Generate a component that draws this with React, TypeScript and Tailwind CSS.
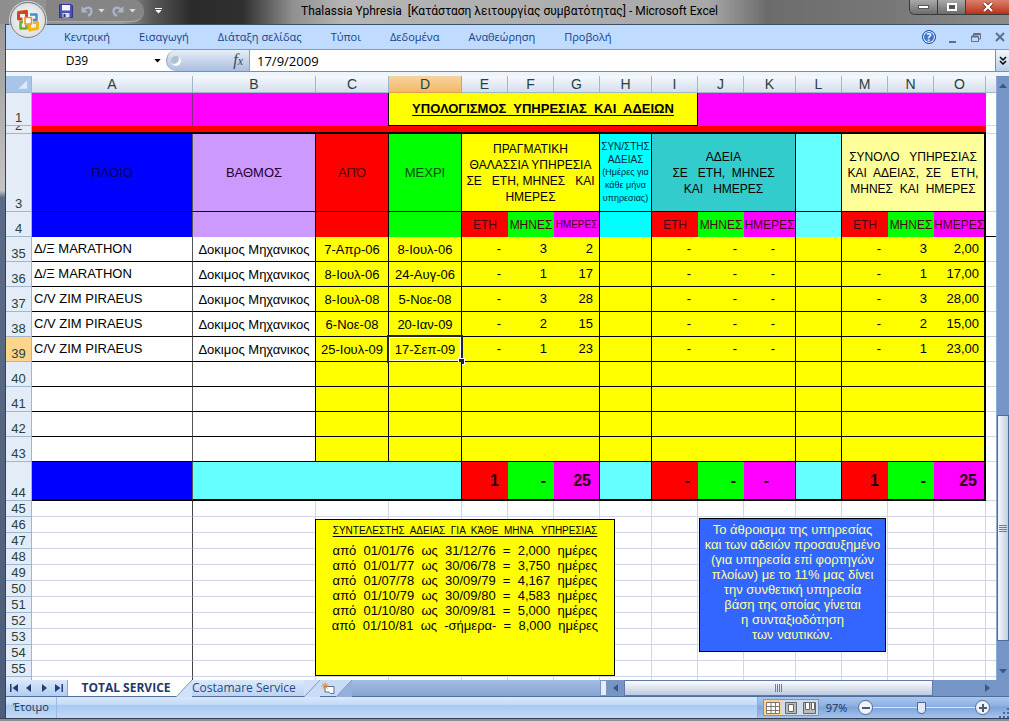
import type { ReactNode } from 'react';

const COLUMNS = [
  { letter: 'A', width: 'w-[161px]' },
  { letter: 'B', width: 'w-[123px]' },
  { letter: 'C', width: 'w-[73px]' },
  { letter: 'D', width: 'w-[73px]' },
  { letter: 'E', width: 'w-[46px]' },
  { letter: 'F', width: 'w-[46px]' },
  { letter: 'G', width: 'w-[46px]' },
  { letter: 'H', width: 'w-[52px]' },
  { letter: 'I', width: 'w-[46px]' },
  { letter: 'J', width: 'w-[46px]' },
  { letter: 'K', width: 'w-[52px]' },
  { letter: 'L', width: 'w-[46px]' },
  { letter: 'M', width: 'w-[46px]' },
  { letter: 'N', width: 'w-[46px]' },
  { letter: 'O', width: 'w-[52px]' },
];

const RIBBON_TABS = [
  'Κεντρική',
  'Εισαγωγή',
  'Διάταξη σελίδας',
  'Τύποι',
  'Δεδομένα',
  'Αναθεώρηση',
  'Προβολή',
];

interface Service {
  row: number;
  ship?: string;
  rank?: string;
  from?: string;
  to?: string;
  months?: string;
  days?: string;
}

const SERVICES: Service[] = [
  { row: 35, ship: 'Δ/Ξ MARATHON', rank: 'Δοκιμος Μηχανικος', from: '7-Απρ-06', to: '8-Ιουλ-06', months: '3', days: '2' },
  { row: 36, ship: 'Δ/Ξ MARATHON', rank: 'Δοκιμος Μηχανικος', from: '8-Ιουλ-06', to: '24-Αυγ-06', months: '1', days: '17' },
  { row: 37, ship: 'C/V ZIM PIRAEUS', rank: 'Δοκιμος Μηχανικος', from: '8-Ιουλ-08', to: '5-Νοε-08', months: '3', days: '28' },
  { row: 38, ship: 'C/V ZIM PIRAEUS', rank: 'Δοκιμος Μηχανικος', from: '6-Νοε-08', to: '20-Ιαν-09', months: '2', days: '15' },
  { row: 39, ship: 'C/V ZIM PIRAEUS', rank: 'Δοκιμος Μηχανικος', from: '25-Ιουλ-09', to: '17-Σεπ-09', months: '1', days: '23' },
  { row: 40 },
  { row: 41 },
  { row: 42 },
  { row: 43 },
];

const EMPTY_ROWS = [45, 46, 47, 48, 49, 50, 51, 52, 53, 54, 55, 56];

const RATES = [
  'από  01/01/76  ως  31/12/76  =  2,000  ημέρες',
  'από  01/01/77  ως  30/06/78  =  3,750  ημέρες',
  'από  01/07/78  ως  30/09/79  =  4,167  ημέρες',
  'από  01/10/79  ως  30/09/80  =  4,583  ημέρες',
  'από  01/10/80  ως  30/09/81  =  5,000  ημέρες',
  'από  01/10/81  ως  -σήμερα-  =  8,000  ημέρες',
];

const NOTE = [
  'Το άθροισμα της υπηρεσίας',
  'και των αδειών προσαυξημένο',
  '(για υπηρεσία επί φορτηγών',
  'πλοίων) με το 11% μας δίνει',
  'την συνθετική υπηρεσία',
  'βάση της οποίας γίνεται',
  'η συνταξιοδότηση',
  'των ναυτικών.',
];

function OfficeLogo() {
  return (
    <svg viewBox="0 0 24 24" className="size-6" fill="none" strokeLinejoin="round">
      <path d="M10.500 9.500V3.200L2.500 4.500v6.500h4" stroke="#d0481a" strokeWidth="3" />
      <path d="M14 6.500h6.500v5.500H17" stroke="#3f8fd0" strokeWidth="2.400" />
      <path d="M7 14H4.500v6.500h6V17" stroke="#6fae2c" strokeWidth="2.600" />
      <path d="M13.500 16v6l8-1.500v-6H17" stroke="#f2b41f" strokeWidth="3" />
      <path d="M9 9.500h6.500V16H9z" stroke="#e9922e" strokeWidth="1.600" fill="#fff" />
    </svg>
  );
}

function SaveIcon() {
  return (
    <svg viewBox="0 0 16 16" className="size-4">
      <path d="M1.500 1.500h11.500l1.500 1.500v11.500h-13z" fill="#4a51b5" stroke="#30358c" />
      <path d="M4 2h8v5.500H4z" fill="#f4f6ff" />
      <path d="M4.500 10h7v4.500h-7z" fill="#d9dcf0" />
      <path d="M5.500 11h2v3h-2z" fill="#2a2f7c" />
    </svg>
  );
}

function UndoIcon({ flipped = false }: { flipped?: boolean }) {
  return (
    <svg viewBox="0 0 14 14" className={flipped ? 'size-[14px] -scale-x-100' : 'size-[14px]'} fill="none">
      <path d="M4 6c2-3.500 7.500-3 7.500 1.200 0 2.300-1.500 3.800-3.500 4.600" stroke="#aab4c6" strokeWidth="2.200" />
      <path d="M1.500 2v6.500H8z" fill="#aab4c6" />
    </svg>
  );
}

function Caret({ className }: { className: string }) {
  return (
    <svg viewBox="0 0 8 5" className={className}>
      <path d="M0 0h8L4 4.500z" fill="currentColor" />
    </svg>
  );
}

function TitleBar() {
  return (
    <header className="relative flex h-[24px] shrink-0 items-start bg-[linear-gradient(90deg,#8e8e8e_0,#9a9a9a_12%,#5a5a5a_15%,#2b2b2b_19%,#2f2f2f_24%,#8f8f8f_29%,#b5b5b5_34%,#a9a9a9_70%,#6c6c6c_76%,#777_88%,#8c8c8c_100%)]">
      <div className="ml-[46px] flex h-[22px] items-center rounded-r-xl border-b border-[#a8a8a8] bg-[#858585] pr-2 pl-3">
        <button aria-label="Αποθήκευση">
          <SaveIcon />
        </button>
        <button aria-label="Αναίρεση" className="ml-[6px] flex items-center gap-1 text-[#dcdcdc]">
          <UndoIcon />
          <Caret className="h-1 w-[7px]" />
        </button>
        <button aria-label="Επανάληψη" className="ml-[6px] flex items-center gap-1 text-[#dcdcdc]">
          <UndoIcon flipped />
          <Caret className="h-1 w-[7px]" />
        </button>
      </div>
      <button aria-label="Προσαρμογή" className="mt-2 ml-[10px] flex w-2 flex-col items-center gap-px text-white">
        <span className="h-px w-[7px] bg-white" />
        <Caret className="h-1 w-[7px]" />
      </button>
      <h1 className="flex-1 pr-[52px] text-center font-['Roboto','Open_Sans',sans-serif] text-[12px] leading-[23px] whitespace-pre text-black">
        {'Thalassia Yphresia  [Κατάσταση λειτουργίας συμβατότητας] - Microsoft Excel'}
      </h1>
      <div className="flex h-[15px] overflow-hidden rounded-bl-md border-b border-l border-[#3a3a3a] text-white">
        <button
          aria-label="Ελαχιστοποίηση"
          className="flex w-7 items-center justify-center border-r border-[#3a3a3a] bg-linear-to-b from-[#a9a9a9] to-[#6d6d6d]"
        >
          <span className="h-1 w-[11px] border border-[#555] bg-white" />
        </button>
        <button
          aria-label="Επαναφορά"
          className="flex w-7 items-center justify-center border-r border-[#3a3a3a] bg-linear-to-b from-[#a9a9a9] to-[#6d6d6d]"
        >
          <span className="h-2 w-[10px] border-2 border-white bg-[#555]" />
        </button>
        <button
          aria-label="Κλείσιμο"
          className="flex w-[43px] items-center justify-center bg-linear-to-b from-[#d8806b] to-[#bd2c12]"
        >
          <svg viewBox="0 0 12 10" className="h-[10px] w-3" fill="none">
            <path d="m2 1 8 8M10 1 2 9" stroke="#5c2018" strokeWidth="3.600" />
            <path d="m2 1 8 8M10 1 2 9" stroke="#fff" strokeWidth="2.400" />
          </svg>
        </button>
      </div>
    </header>
  );
}

function Ribbon() {
  return (
    <nav className="flex h-[26px] shrink-0 items-center border-t border-b border-t-[#3f4f66] border-b-[#7d9cc6] bg-[#bfdbff] text-[#15428b]">
      <div className="flex flex-1 gap-px pl-[44px]">
        {RIBBON_TABS.map((tab) => (
          <button key={tab} className="px-[14px] text-[11px] leading-5 whitespace-nowrap">
            {tab}
          </button>
        ))}
      </div>
      <div className="flex items-center pr-1 text-[#5f6f88]">
        <button
          aria-label="Βοήθεια"
          className="mr-[13px] flex size-[14px] items-center justify-center rounded-full border border-[#1d4fa3] bg-[#3d78cf] text-[10px] leading-3 font-bold text-white ring-1 ring-white ring-inset"
        >
          ?
        </button>
        <button aria-label="Ελαχιστοποίηση παραθύρου" className="mr-[15px] flex h-3 w-[7px] items-end">
          <span className="h-[2px] w-[7px] bg-[#5f6f88]" />
        </button>
        <button aria-label="Επαναφορά παραθύρου" className="mr-[14px]">
          <svg viewBox="0 0 10 9" className="h-[9px] w-[10px]" fill="none" stroke="currentColor">
            <path d="M2.500 3V1h7v5H8" />
            <path d="M.5 3.500h7v5h-7z" />
            <path d="M.5 3.500h7M2.500 1h7" strokeWidth="2" />
          </svg>
        </button>
        <button aria-label="Κλείσιμο παραθύρου">
          <svg viewBox="0 0 10 10" className="size-[10px]" fill="none" stroke="currentColor" strokeWidth="2">
            <path d="m1 1 8 8M9 1 1 9" />
          </svg>
        </button>
      </div>
    </nav>
  );
}

function FormulaBar() {
  return (
    <div className="flex h-[26px] shrink-0 flex-col bg-[#eef4fc]">
      <div className="flex h-[22px] border-b border-[#6f93b8] bg-white">
        <input
          aria-label="Πλαίσιο ονόματος"
          defaultValue="D39"
          className="h-[21px] w-[142px] bg-white text-center text-[12px] text-black outline-none"
        />
        <button aria-label="Λίστα ονομάτων" className="flex w-[18px] items-center justify-center text-black">
          <Caret className="h-1 w-[7px]" />
        </button>
        <div className="flex w-[84px] items-center justify-between rounded-l-full border-r border-l border-[#8aa3c4] bg-linear-to-b from-[#e6eef9] to-[#a9bfde] pr-[6px] pl-1">
          <span className="size-[10px] rounded-full bg-[#b3bfd1] shadow-[inset_-2px_-2px_1px_#fff]" />
          <button aria-label="Εισαγωγή συνάρτησης" className="font-['Liberation_Serif',serif] text-[16px] leading-5 text-[#3a4658] italic">
            f<span className="text-[12px]">x</span>
          </button>
        </div>
        <input
          aria-label="Γραμμή τύπων"
          defaultValue="17/9/2009"
          className="h-[21px] min-w-0 flex-1 bg-white px-[7px] text-[13px] text-black outline-none"
        />
        <button
          aria-label="Ανάπτυξη γραμμής τύπων"
          className="flex w-[14px] items-center justify-center border-l border-[#6f93b8] bg-linear-to-b from-[#f4f8fd] to-[#b9cde8]"
        >
          <svg viewBox="0 0 8 9" className="h-[9px] w-2" fill="none" stroke="#000" strokeWidth="1.500">
            <path d="m1 1 3 3 3-3M1 5l3 3 3-3" />
          </svg>
        </button>
      </div>
    </div>
  );
}

function RowLabel({ children, active = false }: { children: ReactNode; active?: boolean }) {
  return (
    <th
      scope="row"
      className={
        active
          ? 'border-r border-b border-[#9eb6ce] bg-[#ffd58d] p-0 align-bottom text-[13px] leading-[15px] font-normal text-[#27413e]'
          : 'border-r border-b border-[#9eb6ce] bg-[#e4ecf7] p-0 align-bottom text-[13px] leading-[15px] font-normal text-[#27413e]'
      }
    >
      {children}
    </th>
  );
}

// Blank strip of column P, the last one in view
function Edge() {
  return <td className="border-b border-[#d0d7e5] bg-white p-0" />;
}

function UnitHeads({ smallDays = false, last = false }: { smallDays?: boolean; last?: boolean }) {
  return (
    <>
      <td className="bg-[#ff0000] p-0 text-center text-[12px]">ΕΤΗ</td>
      <td className="bg-[#00ff00] p-0 text-center text-[12px]">ΜΗΝΕΣ</td>
      <td
        className={`bg-[#ff00ff] p-0 text-center ${smallDays ? 'text-[10px]' : 'text-[12px]'} ${
          last ? 'border-r-2 border-black' : 'border-r border-black'
        }`}
      >
        ΗΜΕΡΕΣ
      </td>
    </>
  );
}

function ServiceRow({ row, ship, rank, from, to, months, days }: Service) {
  const plain = 'border-b border-black bg-[#ffff00] py-0 pr-[7px] pl-0 text-right';
  const closed = 'border-r border-b border-black bg-[#ffff00] py-0 pr-[6px] pl-0 text-right';
  const dash = ship ? '-' : '';
  return (
    <tr className="h-[25px]">
      <RowLabel active={row === 39}>{row}</RowLabel>
      <td className="border-r border-b border-r-[#555] border-b-black bg-white px-[2px] py-0">{ship}</td>
      <td className="border-r border-b border-black bg-white px-0 pt-[2px] pb-0 text-center">{rank}</td>
      <td className="border-r border-b border-black bg-[#ffff00] px-0 pt-[2px] pb-0 text-center">{from}</td>
      <td className="relative border-r border-b border-black bg-[#ffff00] px-0 pt-[2px] pb-0 text-center">
        {to}
        {row === 39 && (
          <span className="absolute -inset-[2px] border-2 border-[#22223a] outline-1 -outline-offset-3 outline-white">
            <span className="absolute -right-[3px] -bottom-[3px] size-[5px] bg-[#22223a] ring-1 ring-white" />
          </span>
        )}
      </td>
      <td className={plain}>{dash}</td>
      <td className={plain}>{months}</td>
      <td className={closed}>{days}</td>
      <td className={closed} />
      <td className={plain}>{dash}</td>
      <td className={plain}>{dash}</td>
      <td className="border-r border-b border-black bg-[#ffff00] py-0 pr-[20px] pl-0 text-right">{dash}</td>
      <td className={closed} />
      <td className={plain}>{dash}</td>
      <td className={plain}>{months}</td>
      <td className="border-r-2 border-b border-black bg-[#ffff00] py-0 pr-[5px] pl-0 text-right">
        {days && `${days},00`}
      </td>
      <Edge />
    </tr>
  );
}

function Sheet() {
  const columnHead =
    'border-r border-b border-[#9eb6ce] bg-linear-to-b from-[#f6f9fd] to-[#d5deec] p-0 text-[14px] leading-4 font-normal text-[#27413e]';
  const total = 'border-b-2 border-black py-0 pl-0 text-right text-[16px] font-bold text-[#260010]';
  return (
    <table className="w-full table-fixed border-separate border-spacing-0 font-['Liberation_Sans',Arial,sans-serif] text-[13px] leading-4 whitespace-nowrap text-black">
      <colgroup>
        <col className="w-[26px]" />
        {COLUMNS.map((col) => (
          <col key={col.letter} className={col.width} />
        ))}
        <col />
      </colgroup>
      <thead>
        <tr className="h-[17px]">
          <td className="border-r border-b border-[#9eb6ce] bg-[#a9c4e9] p-0">
            <svg viewBox="0 0 26 16" className="block h-4 w-[25px]">
              <path d="M22 4v9H13z" fill="#dfeafa" />
            </svg>
          </td>
          {COLUMNS.map((col) =>
            col.letter === 'D' ? (
              <th
                key={col.letter}
                scope="col"
                className="border-r border-b border-[#e0a050] bg-linear-to-b from-[#f8d3a0] to-[#f1b965] p-0 text-[14px] leading-4 font-normal text-[#27413e]"
              >
                D
              </th>
            ) : (
              <th key={col.letter} scope="col" className={columnHead}>
                {col.letter}
              </th>
            ),
          )}
          <td className="border-b border-[#9eb6ce] bg-linear-to-b from-[#f6f9fd] to-[#d5deec] p-0" />
        </tr>
      </thead>
      <tbody>
        <tr className="h-[33px]">
          <RowLabel>1</RowLabel>
          <td className="border-r border-[#8a2a8a] bg-[#ff00ff] p-0" />
          <td colSpan={2} className="border-r border-black bg-[#ff00ff] p-0" />
          <td
            colSpan={6}
            className="border-r border-b border-black bg-[#ffff00] p-0 text-center font-bold whitespace-pre underline underline-offset-2"
          >
            {'ΥΠΟΛΟΓΙΣΜΟΣ  ΥΠΗΡΕΣΙΑΣ  ΚΑΙ  ΑΔΕΙΩΝ'}
          </td>
          <td colSpan={6} className="bg-[#ff00ff] p-0" />
          <Edge />
        </tr>
        <tr className="h-[8px]">
          <RowLabel>
            <span className="flex h-[7px] items-end justify-center overflow-hidden">2</span>
          </RowLabel>
          <td colSpan={15} className="border-b-2 border-black bg-[#ff0000] p-0" />
          <Edge />
        </tr>
        <tr className="h-[78px]">
          <RowLabel>3</RowLabel>
          <td className="border-r border-b border-r-[#555] border-b-black bg-[#0000ff] p-0 text-center text-[#00005a]">
            ΠΛΟΙΟ
          </td>
          <td className="border-r border-b border-black bg-[#cc99ff] p-0 text-center text-[#22002e]">ΒΑΘΜΟΣ</td>
          <td className="border-r border-b border-black bg-[#ff0000] p-0 text-center text-[#5a0000]">ΑΠΌ</td>
          <td className="border-r border-b border-black bg-[#00ff00] p-0 text-center text-[#004d00]">ΜΕΧΡΙ</td>
          <td colSpan={3} className="border-r border-b border-black bg-[#ffff00] p-0 text-center text-[12px] whitespace-pre">
            {'ΠΡΑΓΜΑΤΙΚΗ\nΘΑΛΑΣΣΙΑ ΥΠΗΡΕΣΙΑ\nΣΕ   ΕΤΗ, ΜΗΝΕΣ   ΚΑΙ\nΗΜΕΡΕΣ'}
          </td>
          <td className="border-r border-b border-black bg-[#00ffff] p-0 text-center whitespace-pre text-[#00263a]">
            <span className="block text-[10px] leading-[13px]">{'ΣΥΝ/ΣΤΗΣ\nΑΔΕΙΑΣ'}</span>
            <span className="block text-[9px] leading-[13px]">{'(Ημέρες για\nκάθε μήνα\nυπηρεσιας)'}</span>
          </td>
          <td colSpan={3} className="border-r border-b border-black bg-[#33cccc] p-0 text-center text-[12px] whitespace-pre">
            {'ΑΔΕΙΑ\nΣΕ   ΕΤΗ,  ΜΗΝΕΣ\nΚΑΙ   ΗΜΕΡΕΣ'}
          </td>
          <td className="border-r border-b border-black bg-[#66ffff] p-0" />
          <td colSpan={3} className="border-r-2 border-b border-black bg-[#ffff99] p-0 text-center text-[12px] whitespace-pre">
            {'ΣΥΝΟΛΟ   ΥΠΗΡΕΣΙΑΣ\nΚΑΙ  ΑΔΕΙΑΣ,  ΣΕ   ΕΤΗ,\nΜΗΝΕΣ  ΚΑΙ  ΗΜΕΡΕΣ'}
          </td>
          <Edge />
        </tr>
        <tr className="h-[25px] text-[#4a0a1a]">
          <RowLabel>4</RowLabel>
          <td className="border-r border-[#555] bg-[#0000ff] p-0" />
          <td className="border-r border-black bg-[#cc99ff] p-0" />
          <td className="border-r border-black bg-[#ff0000] p-0" />
          <td className="border-r border-black bg-[#00ff00] p-0" />
          <UnitHeads smallDays />
          <td className="border-r border-black bg-[#00ffff] p-0" />
          <UnitHeads />
          <td className="border-r border-black bg-[#66ffff] p-0" />
          <UnitHeads last />
          <td className="border-b border-black bg-white p-0" />
        </tr>
        {SERVICES.map((service) => (
          <ServiceRow key={service.row} {...service} />
        ))}
        <tr className="h-[39px]">
          <RowLabel>44</RowLabel>
          <td className="border-r border-b-2 border-r-[#555] border-b-black bg-[#0000ff] p-0" />
          <td colSpan={3} className="border-r border-b-2 border-black bg-[#66ffff] p-0" />
          <td className={`${total} bg-[#ff0000] pr-[9px]`}>1</td>
          <td className={`${total} bg-[#00ff00] pr-2`}>-</td>
          <td className={`${total} border-r bg-[#ff00ff] pr-2`}>25</td>
          <td className="border-r border-b-2 border-black bg-[#66ffff] p-0" />
          <td className={`${total} bg-[#ff0000] pr-2`}>-</td>
          <td className={`${total} bg-[#00ff00] pr-2`}>-</td>
          <td className={`${total} border-r bg-[#ff00ff] pr-[26px]`}>-</td>
          <td className="border-r border-b-2 border-black bg-[#66ffff] p-0" />
          <td className={`${total} bg-[#ff0000] pr-[9px]`}>1</td>
          <td className={`${total} bg-[#00ff00] pr-2`}>-</td>
          <td className={`${total} border-r-2 bg-[#ff00ff] pr-[7px]`}>25</td>
          <Edge />
        </tr>
        {EMPTY_ROWS.map((row) => (
          <tr key={row} className="h-4">
            <RowLabel>{row}</RowLabel>
            {COLUMNS.map((col) => (
              <td
                key={col.letter}
                className={
                  col.letter === 'A'
                    ? 'border-r border-b border-r-[#444] border-b-[#d0d7e5] bg-white p-0'
                    : 'border-r border-b border-[#d0d7e5] bg-white p-0'
                }
              />
            ))}
            <Edge />
          </tr>
        ))}
      </tbody>
    </table>
  );
}

// Drawing objects that float over the grid
function RatesBox() {
  return (
    <aside className="absolute top-[443px] left-[309px] h-[157px] w-[300px] border border-black bg-[#ffff00] pt-[3px] text-center font-['Liberation_Sans',Arial,sans-serif] whitespace-pre text-black">
      <h2 className="text-[10px] leading-4 underline underline-offset-2">
        {'ΣΥΝΤΕΛΕΣΤΗΣ  ΑΔΕΙΑΣ  ΓΙΑ  ΚΆΘΕ  ΜΗΝΑ   ΥΠΗΡΕΣΙΑΣ'}
      </h2>
      <ul className="mt-1 text-[13px] leading-[15px]">
        {RATES.map((rate) => (
          <li key={rate}>{rate}</li>
        ))}
      </ul>
    </aside>
  );
}

function NoteBox() {
  return (
    <aside className="absolute top-[442px] left-[693px] h-[134px] w-[187px] border border-black bg-[#3366ff] pt-[3px] text-center font-['Liberation_Sans',Arial,sans-serif] text-[13px] leading-[15px] whitespace-nowrap text-[#ffff99]">
      {NOTE.map((line) => (
        <p key={line}>{line}</p>
      ))}
    </aside>
  );
}

function Arrow({ d, label }: { d: string; label: string }) {
  return (
    <button aria-label={label} className="flex h-4 w-[15px] items-center justify-center">
      <svg viewBox="0 0 8 8" className="size-2" fill="#1f3f77">
        <path d={d} />
      </svg>
    </button>
  );
}

function VerticalScroll() {
  return (
    <div className="flex w-[13px] shrink-0 flex-col border-l border-[#8fabd3] bg-[#7595c6] text-[#3b5684]">
      <button aria-label="Κύλιση επάνω" className="flex h-[17px] items-center justify-center">
        <Caret className="h-[5px] w-2 rotate-180" />
      </button>
      <div className="flex-[323]" />
      <div className="flex flex-[225] flex-col items-center justify-center gap-px border border-[#4f6b99] bg-linear-to-r from-[#f4f8fc] to-[#c3cfe2]">
        <span className="h-px w-2 bg-[#6c7e9c]" />
        <span className="h-px w-2 bg-[#6c7e9c]" />
        <span className="h-px w-2 bg-[#6c7e9c]" />
        <span className="h-px w-2 bg-[#6c7e9c]" />
      </div>
      <div className="flex-[22]" />
      <button aria-label="Κύλιση κάτω" className="flex h-[17px] items-center justify-center">
        <Caret className="h-[5px] w-2" />
      </button>
    </div>
  );
}

function Slant({ left, right }: { left: string; right: string }) {
  return (
    <svg viewBox="0 0 16 17" className="h-[17px] w-4 shrink-0">
      <path d="M0 0h16L0 17z" fill={left} />
      <path d="M16 0v17H0z" fill={right} />
      <path d="M0 17 16 0" stroke="#7f9cc4" />
    </svg>
  );
}

function SheetTabs() {
  return (
    <div className="flex h-[17px] shrink-0 border-b border-[#4f709f] bg-linear-to-b from-[#a3bde4] to-[#87a5d3]">
      <div className="flex w-[594px] shrink-0">
        <div className="flex w-[62px] justify-center border-r border-[#8aa7d0] bg-linear-to-b from-[#d9e7fa] to-[#b3cdf0]">
          <Arrow label="Πρώτο φύλλο" d="M0 0h1.500v8H0zM8 0v8L2.500 4z" />
          <Arrow label="Προηγούμενο φύλλο" d="M6 0v8L1 4z" />
          <Arrow label="Επόμενο φύλλο" d="M2 0v8l5-4z" />
          <Arrow label="Τελευταίο φύλλο" d="M6.500 0H8v8H6.500zM0 0v8l5.500-4z" />
        </div>
        <button className="w-[108px] bg-white pl-2 text-center text-[12px] leading-4 font-bold whitespace-nowrap text-[#1f3a68]">
          TOTAL SERVICE
        </button>
        <Slant left="#ffffff" right="#d0e1f8" />
        <button className="w-[112px] bg-linear-to-b from-[#dbe9fb] to-[#bcd3f2] text-left text-[12px] leading-4 whitespace-nowrap text-[#1f4a8c]">
          Costamare Service
        </button>
        <Slant left="#cfe0f8" right="#c9dcf6" />
        <button aria-label="Εισαγωγή φύλλου" className="flex w-4 items-center justify-center bg-[#c9dcf6]">
          <svg viewBox="0 0 14 13" className="h-[13px] w-[14px]" fill="none">
            <path d="M4 4.500h9v7H9.500L8 10H4z" fill="#fff" stroke="#5a6f94" />
            <path d="M4 .5v7M.5 4h7M1.500 1.500l5 5M6.500 1.500l-5 5" stroke="#e08a2a" />
          </svg>
        </button>
        <Slant left="#c9dcf6" right="#94b0db" />
      </div>
      <div className="flex min-w-0 flex-1">
        <span className="w-[7px] border border-[#7a95bf] bg-[#e4edf9]" />
        <button aria-label="Κύλιση αριστερά" className="flex w-[17px] items-center justify-center bg-[#7595c6]">
          <svg viewBox="0 0 5 8" className="h-2 w-[5px]" fill="#3b5684">
            <path d="M5 0v8L0 4z" />
          </svg>
        </button>
        <div className="flex flex-[308] items-center justify-center gap-px border border-[#5f7aa6] bg-linear-to-b from-[#fbfcfe] to-[#bccadf]">
          <span className="h-2 w-px bg-[#6c7e9c]" />
          <span className="h-2 w-px bg-[#6c7e9c]" />
          <span className="h-2 w-px bg-[#6c7e9c]" />
          <span className="h-2 w-px bg-[#6c7e9c]" />
        </div>
        <div className="flex-[46] bg-[#7595c6]" />
        <button aria-label="Κύλιση δεξιά" className="flex w-[17px] items-center justify-center bg-[#7595c6]">
          <svg viewBox="0 0 5 8" className="h-2 w-[5px]" fill="#3b5684">
            <path d="M0 0v8l5-4z" />
          </svg>
        </button>
        <span className="w-[13px] bg-[#7595c6]" />
      </div>
    </div>
  );
}

function StatusBar() {
  return (
    <footer className="flex h-[21px] shrink-0 bg-[linear-gradient(#d9e8fb_0,#c4dbf8_35%,#a9c9f2_40%,#c3daf7_100%)] text-[11px] leading-5 text-[#15305e]">
      <p className="w-[51px] border-r border-[#9bb9e2] pl-[7px]">Έτοιμο</p>
      <div className="flex-1" />
      <div className="flex items-center border-l border-[#8fadd8] bg-[linear-gradient(#a9c6ef_0,#8fb2e3_40%,#7ea4da_50%,#a5c4ee_100%)] pr-0 pl-[5px]">
        <div className="flex h-[17px] w-[56px] border border-[#7f96bb] bg-[#cfdcf0] text-[#666]">
          <button aria-label="Κανονική" className="flex flex-1 items-center justify-center bg-[#fbd48a]">
            <svg viewBox="0 0 14 12" className="h-3 w-[14px]" fill="#fff" stroke="#777">
              <path d="M.5.5h13v11H.5zM.5 4.500h13M.5 8.500h13M5 .5v11M9.500.5v11" />
            </svg>
          </button>
          <button aria-label="Διάταξη σελίδας" className="flex flex-1 items-center justify-center">
            <svg viewBox="0 0 12 12" className="size-3" fill="#b9bdb9" stroke="#666">
              <path d="M.5.5h11v11H.5z" />
              <path d="M3.500 2.500h5v7h-5z" fill="#fff" />
            </svg>
          </button>
          <button aria-label="Προεπισκόπηση αλλαγών σελίδας" className="flex flex-1 items-center justify-center">
            <svg viewBox="0 0 13 12" className="h-3 w-[13px]" fill="#b9bdb9" stroke="#666">
              <path d="M.5.5h12v11H.5z" />
              <path d="M2.500.5h4v7h-4zM8.500.5h3v7h-3z" fill="#fff" />
            </svg>
          </button>
        </div>
        <span className="w-[39px] pr-1 text-center">97%</span>
        <button aria-label="Σμίκρυνση" className="flex size-[15px] items-center justify-center rounded-full border border-[#53688c] bg-[#eef3fa]">
          <span className="h-[2px] w-2 bg-[#4a5a75]" />
        </button>
        <input
          type="range"
          aria-label="Ζουμ"
          defaultValue={47}
          className="h-[15px] w-[102px] appearance-none bg-[linear-gradient(#dbe8fa,#dbe8fa)] bg-[length:100%_1px] bg-center bg-no-repeat [&::-webkit-slider-thumb]:h-3 [&::-webkit-slider-thumb]:w-[9px] [&::-webkit-slider-thumb]:appearance-none [&::-webkit-slider-thumb]:rounded-b-[4px] [&::-webkit-slider-thumb]:border [&::-webkit-slider-thumb]:border-[#4d6690] [&::-webkit-slider-thumb]:bg-[#dfe9f7]"
        />
        <button aria-label="Μεγέθυνση" className="flex size-[15px] items-center justify-center rounded-full border border-[#53688c] bg-[#eef3fa]">
          <svg viewBox="0 0 8 8" className="size-2" stroke="#4a5a75" strokeWidth="2">
            <path d="M4 0v8M0 4h8" />
          </svg>
        </button>
        <svg viewBox="0 0 10 10" className="ml-[9px] h-[10px] w-[10px] self-end" fill="#49699c">
          <path d="M8 0h2v2H8zM4 4h2v2H4zM8 4h2v2H8zM0 8h2v2H0zM4 8h2v2H4zM8 8h2v2H8z" />
        </svg>
      </div>
    </footer>
  );
}

export default function App() {
  return (
    <div className="relative flex h-screen flex-col overflow-hidden bg-[#5a6a84] font-['Open_Sans','Noto_Sans',sans-serif]">
      <TitleBar />
      <div className="flex min-h-0 flex-1">
        <div className="w-[6px] shrink-0 border-r border-[#33415c] bg-[linear-gradient(#9a9a9a_0,#c4c4c4_24%,#5d6c86_25%,#4d5c78_100%)]" />
        <div className="flex min-w-0 flex-1 flex-col">
          <Ribbon />
          <FormulaBar />
          <div className="flex min-h-0 flex-1 border-t border-[#6f93b8]">
            <main className="relative -mt-px min-w-0 flex-1 overflow-hidden bg-white">
              <Sheet />
              <RatesBox />
              <NoteBox />
            </main>
            <VerticalScroll />
          </div>
          <SheetTabs />
          <StatusBar />
        </div>
      </div>
      <div className="h-[3px] shrink-0 border-t border-[#33415c] bg-[#8b8f96]" />
      <button
        aria-label="Κουμπί του Office"
        className="absolute top-[2px] left-[10px] flex size-9 items-center justify-center rounded-full border border-[#7c7c7c] bg-radial from-white to-[#cfd3d8] shadow-[0_0_0_1px_#d8d8d8]"
      >
        <OfficeLogo />
      </button>
    </div>
  );
}
